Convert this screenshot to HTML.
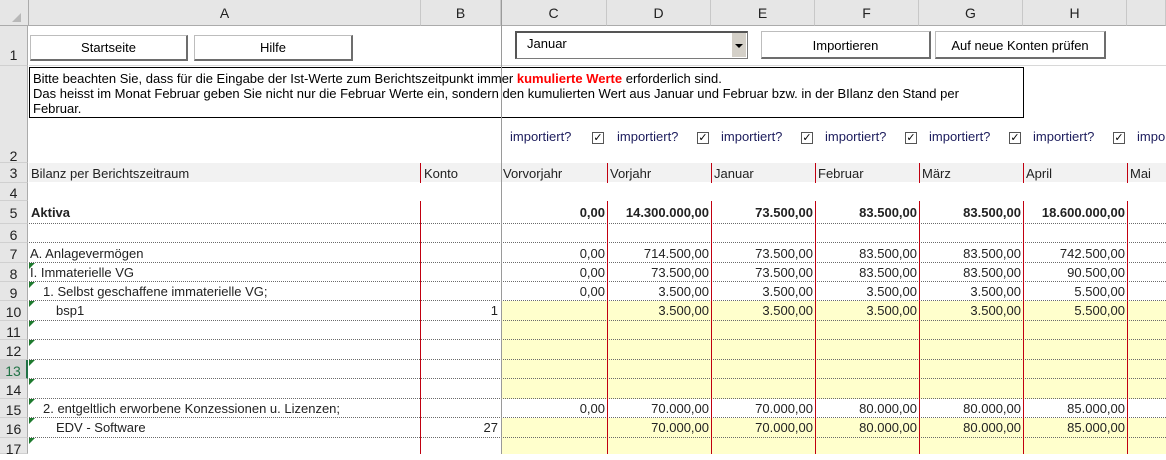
<!DOCTYPE html>
<html><head><meta charset="utf-8"><style>
*{margin:0;padding:0;box-sizing:border-box}
body{width:1166px;height:454px;overflow:hidden;background:#fff;font-family:"Liberation Sans",Arial,sans-serif;font-size:13px;color:#222;position:relative}
.a{position:absolute;white-space:nowrap}
.ch{position:absolute;top:0;height:26px;background:#e6e6e6;border-right:1px solid #c8c8c8;border-bottom:1px solid #ababab;text-align:center;line-height:27px;font-size:14px;color:#222}
.rh{position:absolute;left:0;width:28px;background:#e6e6e6;border-right:1px solid #ababab;border-bottom:1px solid #d0d0d0;text-align:center;font-size:14px;color:#222}
.btn{position:absolute;background:#fff;border:1px solid #bdbdbd;border-right:2px solid #6d6d6d;border-bottom:2px solid #6d6d6d;text-align:center;font-size:13px;color:#000}
.dot{position:absolute;left:29px;width:1137px;height:0;border-top:1px dotted #6a6a6a}
.rl{position:absolute;width:1px;background:#c00010}
.num{position:absolute;text-align:right;white-space:nowrap}
.tri{position:absolute;left:29px;width:0;height:0;border-top:6px solid #1e7a2e;border-right:6px solid transparent}
.cb{position:absolute;top:132px;width:12px;height:12px;border:1px solid #555;background:#fff;font-size:11px;line-height:10px;text-align:center;color:#000}
.imp{position:absolute;top:129px;color:#1c1c5c;font-size:13px}
</style></head><body>
<!-- top-left corner -->
<div class="a" style="left:0;top:0;width:29px;height:26px;background:#e6e6e6;border-right:1px solid #ababab;border-bottom:1px solid #ababab"></div>
<div class="a" style="left:12px;top:13px;width:0;height:0;border-bottom:9px solid #b8b8b8;border-left:9px solid transparent"></div>
<div class="ch" style="left:29px;width:392px">A</div>
<div class="ch" style="left:421px;width:80px">B</div>
<div class="ch" style="left:501px;width:106px">C</div>
<div class="ch" style="left:607px;width:104px">D</div>
<div class="ch" style="left:711px;width:104px">E</div>
<div class="ch" style="left:815px;width:104px">F</div>
<div class="ch" style="left:919px;width:104px">G</div>
<div class="ch" style="left:1023px;width:104px">H</div>
<div class="ch" style="left:1127px;width:39px"></div>

<!-- row headers -->
<div class="rh" style="top:26px;height:40px;line-height:58px">1</div>
<div class="rh" style="top:66px;height:97px;line-height:180px">2</div>
<div class="rh" style="top:163px;height:20px;line-height:21px">3</div>
<div class="rh" style="top:183px;height:18px;line-height:20px">4</div>
<div class="rh" style="top:201px;height:23px;line-height:25px">5</div>
<div class="rh" style="top:224px;height:19px;line-height:22px">6</div>
<div class="rh" style="top:243px;height:20px;line-height:22px">7</div>
<div class="rh" style="top:263px;height:19px;line-height:22px">8</div>
<div class="rh" style="top:282px;height:19px;line-height:22px">9</div>
<div class="rh" style="top:301px;height:20px;line-height:22px">10</div>
<div class="rh" style="top:321px;height:19px;line-height:22px">11</div>
<div class="rh" style="top:340px;height:20px;line-height:22px">12</div>
<div class="rh" style="top:360px;height:19px;line-height:22px;background:#d2d2d2;color:#217346;border-right:2px solid #217346">13</div>
<div class="rh" style="top:379px;height:20px;line-height:22px">14</div>
<div class="rh" style="top:399px;height:19px;line-height:22px">15</div>
<div class="rh" style="top:418px;height:20px;line-height:22px">16</div>
<div class="rh" style="top:438px;height:16px;line-height:22px">17</div>

<!-- row lines for rows 1/2 -->
<div class="a" style="left:29px;top:65px;width:1137px;height:1px;background:#d8d8d8"></div>

<!-- buttons -->
<div class="btn" style="left:30px;top:35px;width:158px;height:26px;line-height:24px">Startseite</div>
<div class="btn" style="left:194px;top:35px;width:159px;height:26px;line-height:24px">Hilfe</div>
<div class="a" style="left:515px;top:31px;width:233px;height:28px;border:1px solid #7a7a7a;border-top:2px solid #555;border-left:2px solid #555;background:#fff"></div>
<div class="a" style="left:527px;top:36px;font-size:13px;color:#000">Januar</div>
<div class="a" style="left:731px;top:33px;width:15px;height:24px;background:#d4d0c8;border-left:1px solid #fff"></div>
<div class="a" style="left:735px;top:44px;width:0;height:0;border-top:4px solid #000;border-left:4px solid transparent;border-right:4px solid transparent"></div>
<div class="btn" style="left:761px;top:31px;width:170px;height:28px;line-height:27px">Importieren</div>
<div class="btn" style="left:935px;top:31px;width:171px;height:28px;line-height:27px">Auf neue Konten prüfen</div>

<!-- text box -->
<div class="a" style="left:29px;top:67px;width:995px;height:51px;border:1px solid #000;background:#fff;padding:3px 0 0 3px;line-height:15px;font-size:13px;color:#000;white-space:normal">Bitte beachten Sie, dass für die Eingabe der Ist-Werte zum Berichtszeitpunkt immer <b style="color:#f00">kumulierte Werte</b> erforderlich sind.<br>Das heisst im Monat Februar geben Sie nicht nur die Februar Werte ein, sondern den kumulierten Wert aus Januar und Februar bzw. in der BIlanz den Stand per<br>Februar.</div>

<!-- checkbox row -->
<div class="imp" style="left:510px">importiert?</div>
<div class="cb" style="left:592px">✓</div>
<div class="imp" style="left:617px">importiert?</div>
<div class="cb" style="left:697px">✓</div>
<div class="imp" style="left:721px">importiert?</div>
<div class="cb" style="left:801px">✓</div>
<div class="imp" style="left:825px">importiert?</div>
<div class="cb" style="left:905px">✓</div>
<div class="imp" style="left:929px">importiert?</div>
<div class="cb" style="left:1009px">✓</div>
<div class="imp" style="left:1033px">importiert?</div>
<div class="cb" style="left:1113px">✓</div>
<div class="imp" style="left:1137px">importiert?</div>

<!-- row 3 band -->
<div class="a" style="left:29px;top:163px;width:1137px;height:19px;background:#f2f2f2"></div>
<div class="a" style="left:31px;top:166px">Bilanz per Berichtszeitraum</div>
<div class="a" style="left:424px;top:166px">Konto</div>
<div class="a" style="left:503px;top:166px">Vorvorjahr</div>
<div class="a" style="left:610px;top:166px">Vorjahr</div>
<div class="a" style="left:714px;top:166px">Januar</div>
<div class="a" style="left:818px;top:166px">Februar</div>
<div class="a" style="left:922px;top:166px">März</div>
<div class="a" style="left:1026px;top:166px">April</div>
<div class="a" style="left:1130px;top:166px">Mai</div>
<div class="rl" style="left:420px;top:163px;height:20px"></div>
<div class="rl" style="left:607px;top:163px;height:20px"></div>
<div class="rl" style="left:711px;top:163px;height:20px"></div>
<div class="rl" style="left:815px;top:163px;height:20px"></div>
<div class="rl" style="left:919px;top:163px;height:20px"></div>
<div class="rl" style="left:1023px;top:163px;height:20px"></div>
<div class="rl" style="left:1127px;top:163px;height:20px"></div>

<!-- yellow fills -->
<div class="a" style="left:502px;top:301px;width:664px;height:98px;background:#ffffcc"></div>
<div class="a" style="left:502px;top:418px;width:664px;height:36px;background:#ffffcc"></div>

<!-- dotted lines -->
<div class="dot" style="top:223px"></div>
<div class="dot" style="top:242px"></div>
<div class="dot" style="top:262px"></div>
<div class="dot" style="top:281px"></div>
<div class="dot" style="top:300px"></div>
<div class="dot" style="top:320px"></div>
<div class="dot" style="top:339px"></div>
<div class="dot" style="top:359px"></div>
<div class="dot" style="top:378px"></div>
<div class="dot" style="top:398px"></div>
<div class="dot" style="top:417px"></div>
<div class="dot" style="top:437px"></div>

<!-- vertical lines data area -->
<div class="rl" style="left:420px;top:201px;height:253px"></div>
<div class="rl" style="left:607px;top:201px;height:253px"></div>
<div class="rl" style="left:711px;top:201px;height:253px"></div>
<div class="rl" style="left:815px;top:201px;height:253px"></div>
<div class="rl" style="left:919px;top:201px;height:253px"></div>
<div class="rl" style="left:1023px;top:201px;height:253px"></div>
<div class="rl" style="left:1127px;top:201px;height:253px"></div>
<!-- freeze pane line -->
<div class="a" style="left:501px;top:0;width:1px;height:454px;background:#9a9a9a"></div>

<!-- triangles -->
<div class="tri" style="top:263px"></div>
<div class="tri" style="top:282px"></div>
<div class="tri" style="top:301px"></div>
<div class="tri" style="top:321px"></div>
<div class="tri" style="top:340px"></div>
<div class="tri" style="top:360px"></div>
<div class="tri" style="top:379px"></div>
<div class="tri" style="top:399px"></div>
<div class="tri" style="top:418px"></div>
<div class="tri" style="top:438px"></div>

<!-- labels col A -->
<div class="a" style="left:31px;top:205px;font-weight:bold">Aktiva</div>
<div class="a" style="left:30px;top:246px">A. Anlagevermögen</div>
<div class="a" style="left:30px;top:265px">I. Immaterielle VG</div>
<div class="a" style="left:43px;top:284px">1. Selbst geschaffene immaterielle VG;</div>
<div class="a" style="left:56px;top:303px">bsp1</div>
<div class="a" style="left:43px;top:401px">2. entgeltlich erworbene Konzessionen u. Lizenzen;</div>
<div class="a" style="left:56px;top:420px">EDV - Software</div>
<div class="num" style="left:421px;width:77px;top:303px">1</div>
<div class="num" style="left:421px;width:77px;top:420px">27</div>

<!-- numbers -->
<div style="font-weight:bold">
<div class="num" style="left:502px;width:103px;top:205px">0,00</div>
<div class="num" style="left:608px;width:101px;top:205px">14.300.000,00</div>
<div class="num" style="left:712px;width:101px;top:205px">73.500,00</div>
<div class="num" style="left:816px;width:101px;top:205px">83.500,00</div>
<div class="num" style="left:920px;width:101px;top:205px">83.500,00</div>
<div class="num" style="left:1024px;width:101px;top:205px">18.600.000,00</div>
</div>
<div class="num" style="left:502px;width:103px;top:246px">0,00</div>
<div class="num" style="left:608px;width:101px;top:246px">714.500,00</div>
<div class="num" style="left:712px;width:101px;top:246px">73.500,00</div>
<div class="num" style="left:816px;width:101px;top:246px">83.500,00</div>
<div class="num" style="left:920px;width:101px;top:246px">83.500,00</div>
<div class="num" style="left:1024px;width:101px;top:246px">742.500,00</div>

<div class="num" style="left:502px;width:103px;top:265px">0,00</div>
<div class="num" style="left:608px;width:101px;top:265px">73.500,00</div>
<div class="num" style="left:712px;width:101px;top:265px">73.500,00</div>
<div class="num" style="left:816px;width:101px;top:265px">83.500,00</div>
<div class="num" style="left:920px;width:101px;top:265px">83.500,00</div>
<div class="num" style="left:1024px;width:101px;top:265px">90.500,00</div>

<div class="num" style="left:502px;width:103px;top:284px">0,00</div>
<div class="num" style="left:608px;width:101px;top:284px">3.500,00</div>
<div class="num" style="left:712px;width:101px;top:284px">3.500,00</div>
<div class="num" style="left:816px;width:101px;top:284px">3.500,00</div>
<div class="num" style="left:920px;width:101px;top:284px">3.500,00</div>
<div class="num" style="left:1024px;width:101px;top:284px">5.500,00</div>

<div class="num" style="left:608px;width:101px;top:303px">3.500,00</div>
<div class="num" style="left:712px;width:101px;top:303px">3.500,00</div>
<div class="num" style="left:816px;width:101px;top:303px">3.500,00</div>
<div class="num" style="left:920px;width:101px;top:303px">3.500,00</div>
<div class="num" style="left:1024px;width:101px;top:303px">5.500,00</div>

<div class="num" style="left:502px;width:103px;top:401px">0,00</div>
<div class="num" style="left:608px;width:101px;top:401px">70.000,00</div>
<div class="num" style="left:712px;width:101px;top:401px">70.000,00</div>
<div class="num" style="left:816px;width:101px;top:401px">80.000,00</div>
<div class="num" style="left:920px;width:101px;top:401px">80.000,00</div>
<div class="num" style="left:1024px;width:101px;top:401px">85.000,00</div>

<div class="num" style="left:608px;width:101px;top:420px">70.000,00</div>
<div class="num" style="left:712px;width:101px;top:420px">70.000,00</div>
<div class="num" style="left:816px;width:101px;top:420px">80.000,00</div>
<div class="num" style="left:920px;width:101px;top:420px">80.000,00</div>
<div class="num" style="left:1024px;width:101px;top:420px">85.000,00</div>
</body></html>
